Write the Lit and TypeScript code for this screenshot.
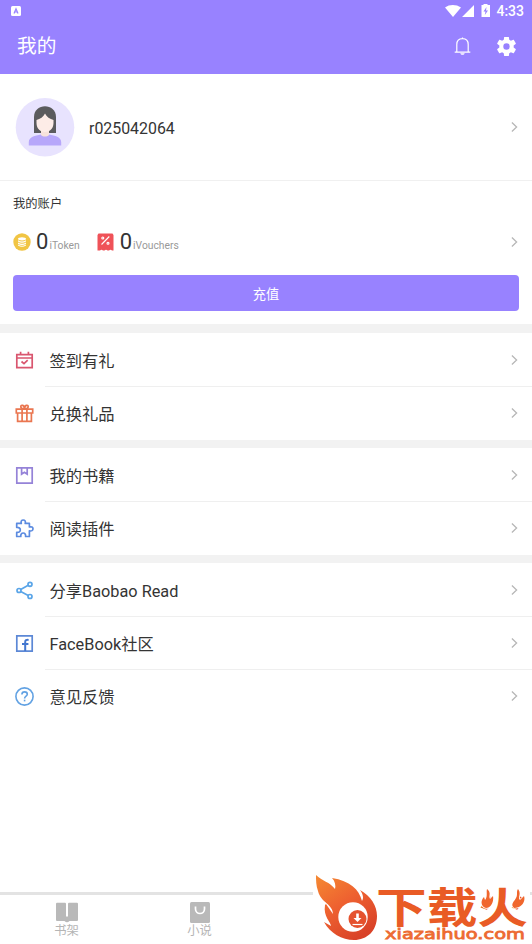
import { LitElement, html, css, svg } from "lit";
import { customElement, property } from "lit/decorators.js";

const icons: Record<string, unknown> = {
  calendar: svg`<g fill="none" stroke="#d9566f" stroke-width="1.7"><path d="M1.8 3.6H17.2V16.6H1.8ZM1.8 7H17.2M5.6 .8V4M13.4 .8V4"/><path d="M6.5 10.5L9 12.7L12.7 9.2"/></g>`,
  gift: svg`<g fill="none" stroke="#ea7650" stroke-width="1.7"><path d="M1.3 5.2H17.7V9H1.3ZM2.6 9V17.3H16.4V9M7.1 5V17M11.9 5V17"/><path d="M9.5 4.8C7.5 4.8 5.8 4.3 5.8 2.7C5.8 .3 9.5 .8 9.5 4.8C9.5 .8 13.2 .3 13.2 2.7C13.2 4.3 11.5 4.8 9.5 4.8Z"/></g>`,
  book: svg`<g fill="none" stroke="#9583d8" stroke-width="1.7"><path d="M1.8 1.8H17.2V17.2H1.8Z"/><path d="M6.6 2V8.1L9.4 6.2L12.2 8.1V2"/></g>`,
  puzzle: svg`<path fill="none" stroke="#5c8be0" stroke-width="1.7" stroke-linejoin="round" d="M1.7 4.4H6.3C5.6 2.3 6.6 1 8.2 1C9.9 1 10.9 2.3 10.2 4.4H14.4V8C16.6 7.4 18 8.2 18 9.8C18 11.4 16.6 12.4 14.4 11.8V17.5H10.6C10.8 15.2 9.9 14 8.2 14C6.5 14 5.6 15.2 5.8 17.5H1.7V13.4C4.1 13.6 5.3 12.7 5.3 11C5.3 9.2 4.1 8.3 1.7 8.5Z"/>`,
  share: svg`<g fill="none" stroke="#5aa5e8" stroke-width="1.7"><circle cx="4" cy="9.5" r="2"/><circle cx="15" cy="3.3" r="2"/><circle cx="15" cy="15.5" r="2"/><path d="M5.7 8.5L13.2 4.3M5.7 10.5L13.2 14.6"/></g>`,
  facebook: svg`<path fill="none" stroke="#5c88d6" stroke-width="1.7" d="M1.8 1.8H17.2V17.2H1.8Z"/><path fill="none" stroke="#4377d0" stroke-width="2" d="M10.2 17V8.1C10.2 6.2 11.3 5.7 13.6 5.9M7 9.9H13.4"/>`,
  help: svg`<g fill="none" stroke="#62a2e3" stroke-width="1.6"><circle cx="9.5" cy="9.5" r="8.6"/><path d="M6.9 7.5C6.9 5.8 8 4.9 9.6 4.9C11.2 4.9 12.3 5.8 12.3 7.3C12.3 9.2 9.6 9.1 9.6 11.4"/><path d="M9.6 12.7V14.4"/></g>`,
};

const chevron = html`<svg class="chevron" width="7" height="12" viewBox="0 0 7 12"><path d="M.9 1.5L5.6 6L.9 10.5" fill="none" stroke="#b7b7b7" stroke-width="1.3"/></svg>`;

const shared = css`
  :host { display: block; }
  * { box-sizing: border-box; }
  svg { display: block; flex: none; }
  .chevron { margin-left: auto; }
`;

@customElement("menu-row")
class MenuRow extends LitElement {
  @property() icon = "";
  @property() label = "";
  static styles = [shared, css`
    .row { height: 53px; display: flex; align-items: center; padding: 0 14px 1px 15px; }
    .label { margin-left: 15.5px; padding-top: 3px; font-size: 16.3px; line-height: 24px; }
    :host(:not(:last-child)) { background: linear-gradient(#efefef, #efefef) 45px 100% / 100% 1px no-repeat; }
  `];
  render() {
    return html`<div class="row">
      <svg width="19" height="19" viewBox="0 0 19 19">${icons[this.icon]}</svg>
      <span class="label">${this.label}</span>${chevron}
    </div>`;
  }
}

@customElement("brand-mark")
class BrandMark extends LitElement {
  static styles = [shared, css`
    .title { font: 700 42px "Noto Sans CJK SC", sans-serif; fill: #e95b25; }
    .site { font: 400 14.5px "DejaVu Sans", sans-serif; fill: #ed6b32; stroke: #ed6b32; stroke-width: .8; }
    .flames { fill: #f0662d; stroke: #fff; stroke-width: 1.6; paint-order: stroke; }
  `];
  render() {
    return html`<svg width="219" height="72" viewBox="313 872 219 72">
      <defs><linearGradient id="fire" x1="0" y1="0" x2=".65" y2="1">
        <stop offset="0" stop-color="#f58a32"/><stop offset=".5" stop-color="#ee6130"/><stop offset="1" stop-color="#d94228"/>
      </linearGradient></defs>
      <path fill="#fff" d="M313 872H530V944H313Z"/>
      <path fill="url(#fire)" d="M316 875C322 881 330 882 335 889C336 886 335 881 332 878C350 881 359 889 362 901C364 898 363 894 360 890C371 896 377 906 377 916C377 931 367 940 354 940C342 940 330 933 324 922L331 926C331 922 323 917 325 905L326 904L333 914C333 904 321 903 318 891C316 886 316 880 316 875Z"/>
      <circle cx="353" cy="917" r="14.7" fill="#fff"/>
      <circle cx="357.5" cy="919" r="9" fill="#e5522e"/>
      <path d="M356.2 913.5H358.8V918H361.5L357.5 922L353.5 918H356.2Z" fill="#fff"/><path d="M352.5 924.5H362.5" stroke="#fff" stroke-width="1.2"/>
      <text class="title" x="376" y="922.5" textLength="152" lengthAdjust="spacingAndGlyphs">下载火</text>
      <path class="flames" d="M487 889C492 893 488 896 490 899L493 896C494 902 491 908 486 908C481 907 480 901 484 897L485 900C488 896 486 892 487 889ZM518 889C522 894 517 898 520 900L524 896C526 902 521 908 514 908C510 904 514 902 516 898C518 894 516 892 518 889Z"/>
      <text class="site" x="385" y="938.5" textLength="140" lengthAdjust="spacingAndGlyphs">xiazaihuo.com</text>
    </svg>`;
  }
}

@customElement("app-root")
class AppRoot extends LitElement {
  static styles = [shared, css`
    :host { height: 944px; position: relative; overflow: hidden; background: #fff; color: #343434; font-family: Roboto, "Noto Sans CJK SC", sans-serif; }
    .page { height: 100%; display: flex; flex-direction: column; }
    header { height: 74px; flex: none; background: #9882ff; color: #fff; }
    .status { height: 22px; padding: 0 8px 0 11px; display: flex; align-items: center; justify-content: space-between; }
    .signals { display: flex; align-items: center; }
    .time { font-size: 14px; font-weight: 500; margin-left: 5px; line-height: 22px; }
    .bar { height: 48px; display: flex; align-items: center; padding: 0 15px 0 17px; }
    .bar h1 { margin: 0 auto 0 0; padding-top: 2px; font-size: 19.7px; font-weight: 400; line-height: 28px; }
    .gear { margin-left: 25px; }
    .profile { height: 107px; flex: none; display: flex; align-items: center; padding: 0 14px 0 15px; border-bottom: 1px solid #f0f0f0; }
    .name { font-size: 15.9px; margin-left: 14px; padding-top: 2px; }
    .account { height: 143px; flex: none; padding: 13px 13px 0; }
    .account h2 { margin: 0; font-size: 12.3px; font-weight: 400; line-height: 20px; }
    .balances { height: 24px; margin: 16px 1px 0 0; display: flex; align-items: center; }
    .amount { font-size: 22px; margin-left: 5px; line-height: 24px; }
    .unit { font-size: 10.3px; color: #999; margin-left: 1px; align-self: flex-end; line-height: 17px; }
    .voucher { margin-left: 17.5px; }
    .voucher + .amount { margin-left: 5.5px; }
    .charge { display: block; width: 100%; height: 36px; margin-top: 21px; border: 0; border-radius: 4px; background: #9882ff; color: #fff; font: 13.2px Roboto, "Noto Sans CJK SC", sans-serif; padding: 0; }
    .group { border-top: 9px solid #f2f2f2; padding-top: 1px; }
    .group + .group { border-top-width: 8px; }
    nav { height: 52px; margin-top: auto; border-top: 3px solid #e3e3e3; display: grid; grid-template-columns: repeat(4, 1fr); flex: none; }
    .tab { display: flex; flex-direction: column; align-items: center; padding: 7px 0 0 0; color: #b5b5b5; font-size: 12.3px; line-height: 16px; }
    brand-mark { position: absolute; right: 0; bottom: 0; }
  `];
  render() {
    return html`<div class="page">
      <header>
        <div class="status">
          <svg width="10" height="10" viewBox="0 0 10 10"><rect width="10" height="10" rx="1.5" fill="#fff"/><path d="M3 7.5L5 2.7L7 7.5M3.8 6H6.2" fill="none" stroke="#9882ff" stroke-width="1.2"/></svg>
          <div class="signals">
            <svg width="46" height="16" viewBox="0 0 46 16" fill="#fff"><path d="M0 4.5C4.5 1.2 11 1.2 16 4.5L8 14ZM17 14L29 2V14ZM38.5 2V1H42.5V2H45V14H36.5V2Z"/><path d="M41.5 4L38.5 8.5H40.5L39.8 12L43 7.5H41Z" fill="#9882ff"/></svg>
            <span class="time">4:33</span>
          </div>
        </div>
        <div class="bar"><h1>我的</h1>
          <svg width="17" height="19" viewBox="0 0 17 19"><path d="M.7 15.2H16.3M2.8 15V7.5C2.8 3.8 5 1.6 8.5 1.6S14.2 3.8 14.2 7.5V15M8.5 1.6V.4" fill="none" stroke="#fff" stroke-width="1.2"/><path d="M6.3 16.2H10.7C10.2 18.4 6.8 18.4 6.3 16.2Z" fill="#fff"/></svg>
          <svg class="gear" width="21" height="21" viewBox="1.5 1.5 21 21"><path fill="#fff" d="M19.14 12.94c.04-.3.06-.61.06-.94 0-.32-.02-.64-.07-.94l2.03-1.58c.18-.14.23-.41.12-.61l-1.92-3.32c-.12-.22-.37-.29-.59-.22l-2.39.96c-.5-.38-1.03-.7-1.62-.94l-.36-2.54c-.04-.24-.24-.41-.48-.41h-3.84c-.24 0-.43.17-.47.41l-.36 2.54c-.59.24-1.13.57-1.62.94l-2.39-.96c-.22-.08-.47 0-.59.22L2.74 8.87c-.12.21-.08.47.12.61l2.03 1.58c-.05.3-.09.63-.09.94s.02.64.07.94l-2.03 1.58c-.18.14-.23.41-.12.61l1.92 3.32c.12.22.37.29.59.22l2.39-.96c.5.38 1.03.7 1.62.94l.36 2.54c.05.24.24.41.48.41h3.84c.24 0 .44-.17.47-.41l.36-2.54c.59-.24 1.13-.56 1.62-.94l2.39.96c.22.08.47 0 .59-.22l1.92-3.32c.12-.22.07-.47-.12-.61zM12 15.2A3.2 3.2 0 1 1 12 8.8a3.2 3.2 0 0 1 0 6.4z"/></svg>
        </div>
      </header>
      <section class="profile">
        <svg width="60" height="60" viewBox="0 0 60 60"><circle cx="30" cy="30.3" r="29.3" fill="#e8e3fe"/><path d="M19 36V20C19 5.5 41 5.5 41 20V36Z" fill="#5b5b5d"/><path d="M13.8 48.5V45C13.8 40 20 38.8 26 37.5H34C40 38.8 46.2 40 46.2 45V48.5Z" fill="#b7a7fa"/><path d="M26 33H34V38C32 40 28 40 26 38Z" fill="#f7e2dc"/><path d="M21.5 23C25 22 28.5 20 30 16.5C31.5 20 35 22 38.5 23V26C38.5 38 21.5 38 21.5 26Z" fill="#fdece7"/></svg>
        <span class="name">r025042064</span>${chevron}
      </section>
      <section class="account">
        <h2>我的账户</h2>
        <div class="balances">
          <svg width="18" height="18" viewBox="0 0 18 18"><circle cx="9" cy="9" r="8.7" fill="#f1c544"/><g fill="#fff"><ellipse cx="9" cy="5.8" rx="4" ry="1.6"/><path d="M5 7.2Q9 9.7 13 7.2V8.5Q9 11 5 8.5ZM5 9.4Q9 11.9 13 9.4V10.7Q9 13.2 5 10.7ZM5 11.5Q9 14 13 11.5V12.5Q9 15 5 12.5Z"/></g></svg>
          <span class="amount">0</span><span class="unit">iToken</span>
          <svg class="voucher" width="17" height="18" viewBox="0 0 17 18"><path d="M1.5 .5H15.5L16.5 2V17.5H15Q13.5 15.9 12 17.5H10.5Q9 15.9 7.5 17.5H6Q4.5 15.9 3 17.5H.5V2Z" fill="#ef5258"/><g fill="none" stroke="#fff" stroke-width="1.1"><path d="M4.5 11.5L12.3 3.5"/><circle cx="5.8" cy="5" r="1"/><circle cx="11" cy="10.3" r="1"/></g></svg>
          <span class="amount">0</span><span class="unit">iVouchers</span>${chevron}
        </div>
        <button class="charge">充值</button>
      </section>
      <section class="group"><menu-row icon="calendar" label="签到有礼"></menu-row><menu-row icon="gift" label="兑换礼品"></menu-row></section>
      <section class="group"><menu-row icon="book" label="我的书籍"></menu-row><menu-row icon="puzzle" label="阅读插件"></menu-row></section>
      <section class="group"><menu-row icon="share" label="分享Baobao Read"></menu-row><menu-row icon="facebook" label="FaceBook社区"></menu-row><menu-row icon="help" label="意见反馈"></menu-row></section>
      <nav>
        <div class="tab"><svg width="22" height="21" viewBox="0 0 22 21" fill="#b9b9b9"><path d="M1 .8H9Q10 .8 10 2V14.5H12V2Q12 .8 13 .8H21Q22 .8 22 2V18Q22 19 21 19H13.5Q11 21.5 8.5 19H1Q0 19 0 18V2Q0 .8 1 .8Z"/></svg><span>书架</span></div>
        <div class="tab"><svg width="20" height="21" viewBox="0 0 20 21"><rect width="20" height="21" rx="1.5" fill="#b9b9b9"/><path d="M5.5 4.5V7C5.5 13 14.5 13 14.5 7V4.5" fill="none" stroke="#fff" stroke-width="1.7"/></svg><span>小说</span></div>
      </nav>
    </div><brand-mark></brand-mark>`;
  }
}
